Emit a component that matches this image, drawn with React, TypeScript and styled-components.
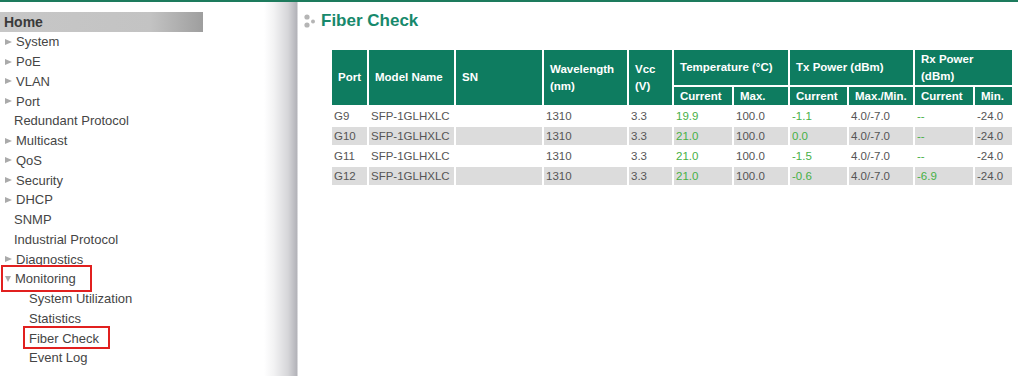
import React from 'react';
import styled, { createGlobalStyle } from 'styled-components';

const GlobalStyle = createGlobalStyle`
  body {
    margin: 0;
    background: #fff;
    font-family: "Liberation Sans", Arial, sans-serif;
  }
`;

const Page = styled.div`
  width: 1018px;
  height: 374px;
  border-top: 2px solid #1d7b5d;
  display: flex;
  overflow: hidden;
`;

const Sidebar = styled.nav`
  width: 298px;
  flex: none;
  padding-top: 10px;
  box-sizing: border-box;
  background: linear-gradient(
    to right,
    #fff 0,
    #fff 264px,
    #f2f2f3 274px,
    #d6d6d9 288px,
    #b2b2b8 297px,
    #fff 298px
  );
`;

const HomeBar = styled.div`
  width: 203px;
  height: 20px;
  line-height: 20px;
  padding-left: 4px;
  box-sizing: border-box;
  font-size: 14px;
  font-weight: bold;
  color: #3a3a3a;
  background: linear-gradient(to right, #c7c7c7 0, #c3c3c3 150px, #9e9e9e 203px);
`;

const MenuList = styled.ul`
  list-style: none;
  margin: 0;
  padding: 0;
`;

type Box = { left: number; width: number; top: number; bottom: number };

const MenuItem = styled.li<{ $indent: number; $box?: Box }>`
  position: relative;
  height: 19.75px;
  display: flex;
  align-items: center;
  padding-left: ${(p) => p.$indent}px;
  font-size: 13px;
  color: #454545;
  white-space: nowrap;

  ${(p) =>
    p.$box &&
    `
    &::after {
      content: '';
      position: absolute;
      left: ${p.$box.left}px;
      width: ${p.$box.width}px;
      top: ${p.$box.top}px;
      bottom: ${p.$box.bottom}px;
      border: 2px solid #e1201f;
      box-sizing: border-box;
    }
  `}
`;

const Arrow = styled.span<{ $open?: boolean }>`
  width: 0;
  height: 0;
  margin-right: 4px;
  ${(p) =>
    p.$open
      ? `
    border-left: 3.5px solid transparent;
    border-right: 3.5px solid transparent;
    border-top: 6px solid #aaa;
    margin-right: 4px;
  `
      : `
    border-top: 3.5px solid transparent;
    border-bottom: 3.5px solid transparent;
    border-left: 7px solid #aaa;
  `}
`;

const Main = styled.main`
  flex: 1;
  padding: 9px 0 0 5px;
`;

const TitleRow = styled.h1`
  margin: 0;
  height: 20px;
  display: flex;
  align-items: center;
  gap: 2px;
  font-size: 17px;
  font-weight: bold;
  color: #17896c;
`;

const Table = styled.table`
  margin: 17px 0 0 27px;
  border-collapse: separate;
  border-spacing: 2px;
  table-layout: fixed;
  width: 684px;
  font-size: 11.5px;
`;

const Th = styled.th<{ $center?: boolean }>`
  background: #0e7c60;
  color: #fff;
  font-weight: bold;
  text-align: ${(p) => (p.$center ? 'center' : 'left')};
  padding: 0 6px;
  line-height: 17px;
  vertical-align: middle;
`;

const HeadRow = styled.tr<{ $h: number }>`
  height: ${(p) => p.$h}px;
`;

const Row = styled.tr<{ $shade: boolean }>`
  height: 18px;
  td {
    background: ${(p) => (p.$shade ? '#dcdcdc' : '#fff')};
  }
`;

const Td = styled.td<{ $green?: boolean }>`
  padding: 0 2px;
  color: ${(p) => (p.$green ? '#46b046' : '#555')};
  white-space: nowrap;
  overflow: hidden;
`;

const Dots = () => (
  <svg width="16" height="16" viewBox="0 0 16 16">
    <circle cx="4" cy="4" r="2.6" fill="#b5b5b5" />
    <circle cx="4" cy="12" r="2.6" fill="#b5b5b5" />
    <circle cx="10" cy="8.5" r="2" fill="#b5b5b5" />
  </svg>
);

type Item = { label: string; arrow?: 'closed' | 'open'; indent: number; box?: Box };

const menu: Item[] = [
  { label: 'System', arrow: 'closed', indent: 5 },
  { label: 'PoE', arrow: 'closed', indent: 5 },
  { label: 'VLAN', arrow: 'closed', indent: 5 },
  { label: 'Port', arrow: 'closed', indent: 5 },
  { label: 'Redundant Protocol', indent: 14 },
  { label: 'Multicast', arrow: 'closed', indent: 5 },
  { label: 'QoS', arrow: 'closed', indent: 5 },
  { label: 'Security', arrow: 'closed', indent: 5 },
  { label: 'DHCP', arrow: 'closed', indent: 5 },
  { label: 'SNMP', indent: 14 },
  { label: 'Industrial Protocol', indent: 14 },
  { label: 'Diagnostics', arrow: 'closed', indent: 5 },
  { label: 'Monitoring', arrow: 'open', indent: 5, box: { left: 1, width: 91, top: -4, bottom: -3 } },
  { label: 'System Utilization', indent: 29 },
  { label: 'Statistics', indent: 29 },
  { label: 'Fiber Check', indent: 29, box: { left: 23, width: 87, top: -2, bottom: -1 } },
  { label: 'Event Log', indent: 29 },
];

type Fiber = {
  port: string;
  temp: string;
  tx: string;
  rx: string;
};

const rows: Fiber[] = [
  { port: 'G9', temp: '19.9', tx: '-1.1', rx: '--' },
  { port: 'G10', temp: '21.0', tx: '0.0', rx: '--' },
  { port: 'G11', temp: '21.0', tx: '-1.5', rx: '--' },
  { port: 'G12', temp: '21.0', tx: '-0.6', rx: '-6.9' },
];

// column widths taken from the reference (cell widths, spacing excluded)
const widths = [35, 85, 86, 83, 43, 58, 54, 57, 64, 58, 37];

const App: React.FC = () => (
  <>
    <GlobalStyle />
    <Page>
      <Sidebar>
        <HomeBar>Home</HomeBar>
        <MenuList>
          {menu.map((m) => (
            <MenuItem key={m.label} $indent={m.indent} $box={m.box}>
              {m.arrow && <Arrow $open={m.arrow === 'open'} />}
              {m.label}
            </MenuItem>
          ))}
        </MenuList>
      </Sidebar>
      <Main>
        <TitleRow>
          <Dots />
          Fiber Check
        </TitleRow>
        <Table>
          <colgroup>
            {widths.map((w, i) => (
              <col key={i} style={{ width: w }} />
            ))}
          </colgroup>
          <thead>
            <HeadRow $h={35}>
              <Th rowSpan={2} $center>Port</Th>
              <Th rowSpan={2}>Model Name</Th>
              <Th rowSpan={2}>SN</Th>
              <Th rowSpan={2}>Wavelength (nm)</Th>
              <Th rowSpan={2}>Vcc (V)</Th>
              <Th colSpan={2}>Temperature (°C)</Th>
              <Th colSpan={2}>Tx Power (dBm)</Th>
              <Th colSpan={2}>Rx Power (dBm)</Th>
            </HeadRow>
            <HeadRow $h={18}>
              <Th>Current</Th>
              <Th>Max.</Th>
              <Th>Current</Th>
              <Th>Max./Min.</Th>
              <Th>Current</Th>
              <Th>Min.</Th>
            </HeadRow>
          </thead>
          <tbody>
            {rows.map((r, i) => (
              <Row key={r.port} $shade={i % 2 === 1}>
                <Td>{r.port}</Td>
                <Td>SFP-1GLHXLC</Td>
                <Td></Td>
                <Td>1310</Td>
                <Td>3.3</Td>
                <Td $green>{r.temp}</Td>
                <Td>100.0</Td>
                <Td $green>{r.tx}</Td>
                <Td>4.0/-7.0</Td>
                <Td $green>{r.rx}</Td>
                <Td>-24.0</Td>
              </Row>
            ))}
          </tbody>
        </Table>
      </Main>
    </Page>
  </>
);

export default App;
